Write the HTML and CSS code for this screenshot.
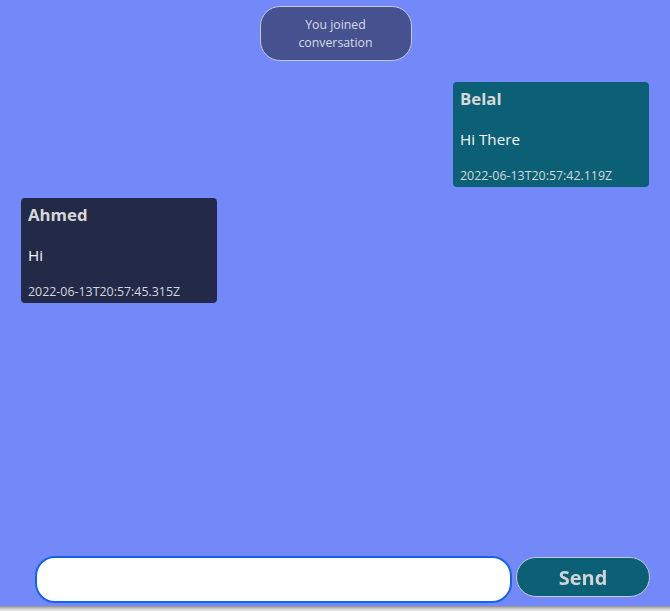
FILE: index.html
```html
<!DOCTYPE html>
<html>
<head>
<meta charset="utf-8">
<link rel="stylesheet" href="styles.css">
</head>
<body>
<div class="app">
  <div class="messages">
    <div class="notice">You joined<br>conversation</div>
    <div class="row right">
      <div class="bubble mine">
        <div class="name">Belal</div>
        <div class="text">Hi There</div>
        <div class="time">2022-06-13T20:57:42.119Z</div>
      </div>
    </div>
    <div class="row left">
      <div class="bubble other">
        <div class="name">Ahmed</div>
        <div class="text">Hi</div>
        <div class="time">2022-06-13T20:57:45.315Z</div>
      </div>
    </div>
  </div>
  <form class="composer">
    <input class="input" id="msg" type="text" autofocus>
    <button class="send" type="button">Send</button>
  </form>
</div>
<div class="bottom-edge"></div>
<script src="script.js"></script>
</body>
</html>
```

FILE: styles.css
```css
html, body {
  margin: 0;
  padding: 0;
  height: 100%;
  overflow: hidden;
}
body {
  background: #7389fa;
  font-family: "Open Sans", "Noto Sans", "DejaVu Sans", sans-serif;
  display: flex;
  flex-direction: column;
}
.app {
  flex: 1;
  display: flex;
  flex-direction: column;
  min-height: 0;
}
.messages {
  flex: 1;
  display: flex;
  flex-direction: column;
  padding: 6px 21px 0 21px;
}
.notice {
  align-self: center;
  box-sizing: border-box;
  width: 152px;
  height: 55px;
  border: 1px solid #c9c9d6;
  border-radius: 20px;
  background: #45528f;
  color: #d8dae6;
  font-size: 12.3px;
  line-height: 18px;
  text-align: center;
  display: flex;
  align-items: center;
  justify-content: center;
  margin-left: 1px;
}
.row {
  display: flex;
}
.row.right {
  justify-content: flex-end;
  margin-top: 21px;
}
.row.left {
  justify-content: flex-start;
  margin-top: 11px;
}
.bubble {
  box-sizing: border-box;
  width: 196px;
  height: 105px;
  border-radius: 4px;
  padding: 6px 7px 0 7px;
  color: #ffffff;
}
.mine {
  background: #0b6075;
}
.other {
  background: #232a48;
}
.name {
  font-size: 16.8px;
  font-weight: bold;
  color: #d6d8d8;
  line-height: 22px;
}
.text {
  font-size: 15.2px;
  line-height: 20px;
  margin-top: 19px;
  color: #f4f6f8;
}
.time {
  font-size: 12.4px;
  line-height: 16px;
  margin-top: 19px;
  color: #d4d8de;
}
.composer {
  display: flex;
  align-items: flex-start;
  gap: 4px;
  padding: 0 20px 3px 35px;
  margin: 0;
}
.input {
  box-sizing: border-box;
  width: 477px;
  height: 47px;
  border: 2px solid #1664e6;
  border-radius: 20px;
  background: #ffffff;
  outline: none;
  padding: 0 1px;
  font-size: 16px;
  font-family: inherit;
  caret-color: #000;
}
.send {
  box-sizing: border-box;
  width: 134px;
  height: 40px;
  margin-top: 1px;
  border: 1px solid #c4c8cc;
  border-radius: 20px;
  background: #0b6075;
  color: #d0d4d4;
  font-family: inherit;
  font-size: 20px;
  font-weight: bold;
  cursor: pointer;
}
.bottom-edge {
  height: 5px;
  flex: none;
  background: linear-gradient(#8f8f8f, #d4d4d4 60%, #e8e8e8);
}
```

FILE: script.js
```js
document.getElementById('msg').focus();
```
